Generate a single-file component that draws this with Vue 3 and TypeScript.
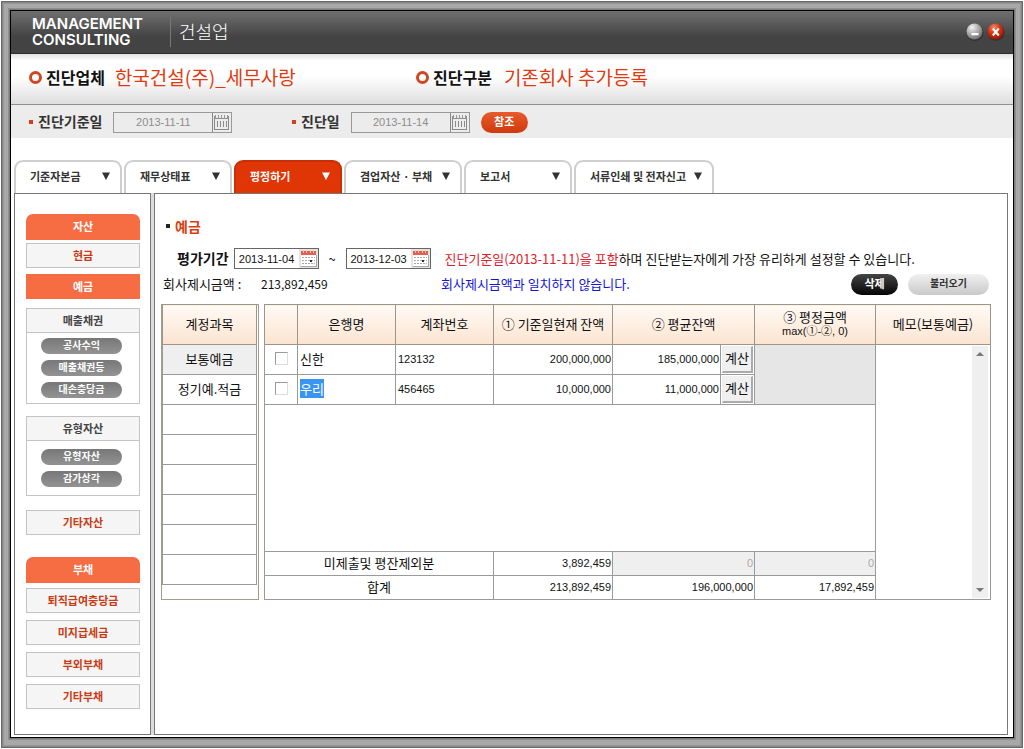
<script setup lang="ts">
import { ref } from 'vue'

interface Tab { label: string; width: string }
interface Deposit { id: number; bank: string; account: string; balance: string; average: string; checked: boolean; selected: boolean }

const tabs: Tab[] = [
  { label: '기준자본금', width: 'w-m' },
  { label: '재무상태표', width: 'w-m' },
  { label: '평정하기', width: 'w-m' },
  { label: '겸업자산 · 부채', width: 'w-l' },
  { label: '보고서', width: 'w-m' },
  { label: '서류인쇄 및 전자신고', width: 'w-xl' },
]
const activeTab = ref('평정하기')

const accounts = ['보통예금', '정기예.적금', '', '', '', '', '', '']
const debts = ['퇴직급여충당금', '미지급세금', '부외부채', '기타부채']

const deposits = ref<Deposit[]>([
  { id: 1, bank: '신한', account: '123132', balance: '200,000,000', average: '185,000,000', checked: false, selected: false },
  { id: 2, bank: '우리', account: '456465', balance: '10,000,000', average: '11,000,000', checked: false, selected: true },
])
const baseDate = ref('2013-11-11')
const reviewDate = ref('2013-11-14')
const fromDate = ref('2013-11-04')
const toDate = ref('2013-12-03')
const memo = ref('')
</script>

<template>
  <div class="frame">
    <div class="bezel">
      <div class="window">
        <header class="titlebar">
          <div class="brand"><div>MANAGEMENT</div><div>CONSULTING</div></div>
          <h1 class="product">건설업</h1>
          <div class="controls">
            <button class="ctl" type="button" aria-label="최소화">
              <svg width="18" height="18" viewBox="0 0 18 18">
                <defs><radialGradient id="gm" cx="35%" cy="25%" r="80%"><stop offset="0" stop-color="#f2f2f2" /><stop offset=".5" stop-color="#adadad" /><stop offset="1" stop-color="#6c6c6c" /></radialGradient></defs>
                <circle cx="9" cy="9.500" r="8.500" fill="#333" /><circle cx="8.500" cy="8.500" r="8" fill="url(#gm)" />
                <rect x="5.500" y="10" width="7" height="2.200" fill="#fff" />
              </svg>
            </button>
            <button class="ctl" type="button" aria-label="닫기">
              <svg width="18" height="18" viewBox="0 0 18 18">
                <defs><radialGradient id="gx" cx="40%" cy="25%" r="80%"><stop offset="0" stop-color="#f48a6c" /><stop offset=".5" stop-color="#d92f10" /><stop offset="1" stop-color="#8e1402" /></radialGradient></defs>
                <circle cx="9" cy="9.500" r="8.500" fill="#333" /><circle cx="8.500" cy="8.500" r="8" fill="url(#gx)" />
                <path d="M5.800 5.500l6 7M11.800 5.500l-6 7" stroke="#fff" stroke-width="2" fill="none" />
              </svg>
            </button>
          </div>
        </header>

        <section class="company">
          <div class="pair first"><i class="ring"></i><b>진단업체</b><span>한국건설(주)_세무사랑</span></div>
          <div class="pair"><i class="ring"></i><b>진단구분</b><span class="kind">기존회사 추가등록</span></div>
        </section>

        <section class="dates">
          <div class="date-group first">
            <i class="dot"></i><label for="base">진단기준일</label>
            <div class="datebox wide">
              <input id="base" v-model="baseDate" type="text" readonly>
              <button type="button" aria-label="진단기준일 달력">
                <svg width="19" height="19" viewBox="0 0 19 19" shape-rendering="crispEdges">
                  <path d="M.5 0v19" stroke="#888" /><path d="M2.500 3v13.500h14V3M2 5.500h15" fill="none" stroke="#8a8a8a" /><path d="M3.500 2v4M6.500 2v4M9.500 2v4M12.500 2v4M15.500 2v4" stroke="#999" /><path d="M5.500 8v6M8.500 8v6M11.500 8v6M14.500 8v6" stroke="#8a8a8a" />
                </svg>
              </button>
            </div>
          </div>
          <div class="date-group">
            <i class="dot"></i><label for="review">진단일</label>
            <div class="datebox wide">
              <input id="review" v-model="reviewDate" type="text" readonly>
              <button type="button" aria-label="진단일 달력">
                <svg width="19" height="19" viewBox="0 0 19 19" shape-rendering="crispEdges">
                  <path d="M.5 0v19" stroke="#888" /><path d="M2.500 3v13.500h14V3M2 5.500h15" fill="none" stroke="#8a8a8a" /><path d="M3.500 2v4M6.500 2v4M9.500 2v4M12.500 2v4M15.500 2v4" stroke="#999" /><path d="M5.500 8v6M8.500 8v6M11.500 8v6M14.500 8v6" stroke="#8a8a8a" />
                </svg>
              </button>
            </div>
          </div>
          <button class="pill red" type="button">참조</button>
        </section>

        <nav class="tabs">
          <button v-for="t in tabs" :key="t.label" type="button" class="tab" :class="[t.width, { active: t.label === activeTab }]" @click="activeTab = t.label">
            <span>{{ t.label }}</span>
            <svg width="8" height="8" viewBox="0 0 8 8"><path d="M0 .5h8L4 8z" fill="currentColor" /></svg>
          </button>
        </nav>

        <div class="body">
          <aside class="side">
            <button class="head" type="button">자산</button>
            <button class="item s3" type="button">현금</button>
            <button class="item on s6" type="button">예금</button>
            <div class="group s9">
              <div class="group-title">매출채권</div>
              <div class="subs">
                <button type="button">공사수익</button>
                <button type="button">매출채권등</button>
                <button type="button">대손충당금</button>
              </div>
            </div>
            <div class="group s12">
              <div class="group-title">유형자산</div>
              <div class="subs">
                <button type="button">유형자산</button>
                <button type="button">감가상각</button>
              </div>
            </div>
            <button class="item s14" type="button">기타자산</button>
            <button class="head s22" type="button">부채</button>
            <div class="debts">
              <button v-for="d in debts" :key="d" class="item" type="button">{{ d }}</button>
            </div>
          </aside>

          <main class="content">
            <h2>예금</h2>
            <div class="period">
              <label for="from">평가기간</label>
              <div class="datebox">
                <input id="from" v-model="fromDate" type="text">
                <button type="button" aria-label="시작일 달력">
                  <svg width="19" height="19" viewBox="0 0 19 19" shape-rendering="crispEdges">
                    <path d="M0 0h19v19H0z" fill="#e4e4e4" /><path d="M2 6h15v11H2z" fill="#fff" /><path d="M2 2h15v4H2z" fill="#e4604e" /><path d="M4 1h1v3H4zM7 1h1v3H7zM11 1h1v3h-1zM14 1h1v3h-1z" fill="#f7c1b8" /><path d="M3 8.500h13M3 11.500h13M3 14.500h13" stroke="#aaa" stroke-dasharray="2 1" /><path d="M11 11h2v2h-2z" fill="#333" /><path d="M2 17.500h15.500V6" fill="none" stroke="#aaa" />
                  </svg>
                </button>
              </div>
              <span class="tilde">~</span>
              <div class="datebox">
                <input v-model="toDate" type="text" aria-label="종료일">
                <button type="button" aria-label="종료일 달력">
                  <svg width="19" height="19" viewBox="0 0 19 19" shape-rendering="crispEdges">
                    <path d="M0 0h19v19H0z" fill="#e4e4e4" /><path d="M2 6h15v11H2z" fill="#fff" /><path d="M2 2h15v4H2z" fill="#e4604e" /><path d="M4 1h1v3H4zM7 1h1v3H7zM11 1h1v3h-1zM14 1h1v3h-1z" fill="#f7c1b8" /><path d="M3 8.500h13M3 11.500h13M3 14.500h13" stroke="#aaa" stroke-dasharray="2 1" /><path d="M11 11h2v2h-2z" fill="#333" /><path d="M2 17.500h15.500V6" fill="none" stroke="#aaa" />
                  </svg>
                </button>
              </div>
              <p><em>진단기준일(2013-11-11)을 포함</em>하며 진단받는자에게 가장 유리하게 설정할 수 있습니다.</p>
            </div>
            <div class="amount">
              <span class="amount-label">회사제시금액 :</span>
              <span class="amount-value">213,892,459</span>
              <span class="warn">회사제시금액과 일치하지 않습니다.</span>
              <div class="actions">
                <button class="pill black" type="button">삭제</button>
                <button class="pill silver" type="button">불러오기</button>
              </div>
            </div>

            <div class="grids">
              <div class="accounts">
                <table>
                  <thead><tr><th>계정과목</th></tr></thead>
                  <tbody><tr v-for="(a, i) in accounts" :key="i"><td :class="{ current: i === 0 }">{{ a }}</td></tr></tbody>
                </table>
              </div>
              <table class="ledger">
                <colgroup>
                  <col class="c-check"><col class="c-name"><col class="c-name"><col class="c-bal"><col class="c-avg"><col class="c-calc"><col class="c-net"><col>
                </colgroup>
                <thead>
                  <tr>
                    <th></th><th>은행명</th><th>계좌번호</th><th>① 기준일현재 잔액</th><th colspan="2">② 평균잔액</th>
                    <th class="two"><div>③ 평정금액</div><small>max(①-②, 0)</small></th><th>메모(보통예금)</th>
                  </tr>
                </thead>
                <tbody>
                  <tr v-for="(d, i) in deposits" :key="d.id" class="row">
                    <td class="mid"><input v-model="d.checked" type="checkbox" :aria-label="d.bank"></td>
                    <td><mark v-if="d.selected">{{ d.bank }}</mark><template v-else>{{ d.bank }}</template></td>
                    <td class="digits">{{ d.account }}</td>
                    <td class="num">{{ d.balance }}</td>
                    <td class="num">{{ d.average }}</td>
                    <td class="calc"><button type="button">계산</button></td>
                    <td v-if="i === 0" rowspan="2" class="shade"></td>
                    <td v-if="i === 0" rowspan="5" class="memo">
                      <div class="memo-box">
                        <textarea v-model="memo" aria-label="메모(보통예금)"></textarea>
                        <div class="scroll">
                          <button type="button" aria-label="위로"><svg width="8" height="5" viewBox="0 0 8 5"><path d="M4 0l4 4H0z" fill="#777" /></svg></button>
                          <button type="button" aria-label="아래로"><svg width="8" height="5" viewBox="0 0 8 5"><path d="M4 5l4-4H0z" fill="#777" /></svg></button>
                        </div>
                      </div>
                    </td>
                  </tr>
                  <tr class="blank"><td colspan="7"></td></tr>
                  <tr class="sum"><td colspan="3" class="mid">미제출및 평잔제외분</td><td class="num">3,892,459</td><td colspan="2" class="num off">0</td><td class="num off">0</td></tr>
                  <tr class="sum"><td colspan="3" class="mid">합계</td><td class="num">213,892,459</td><td colspan="2" class="num">196,000,000</td><td class="num">17,892,459</td></tr>
                </tbody>
              </table>
            </div>
          </main>
        </div>
      </div>
    </div>
  </div>
</template>

<style>
body { margin: 0; background: #fff; }
</style>

<style scoped>
* { box-sizing: border-box; }
.frame {
  display: flex;
  min-height: 100vh;
  padding: 1px;
  color: #111;
  font: 13px/16px "Noto Sans CJK KR", "Liberation Sans", sans-serif;
}
.bezel {
  flex: 1;
  display: flex;
  padding: 9px 9px 10px;
  background: #a8a8a8;
  box-shadow: inset 0 0 0 1px #6a6a6a, inset 0 0 0 2px #868686, inset 0 0 0 3px #989898;
}
.window {
  flex: 1;
  min-width: 0;
  display: flex;
  flex-direction: column;
  border: 1px solid #000;
  background: #fff;
  box-shadow: 0 0 0 1px #7c7c7c, 0 0 0 2px #8e8e8e;
}
button { margin: 0; padding: 0 0 2px; border: 0; background: none; color: inherit; font: inherit; cursor: pointer; }
input, textarea { margin: 0; padding: 0; border: 0; background: none; color: inherit; font: inherit; }
svg { display: block; }
h1, h2, p { margin: 0; }

.titlebar {
  display: flex;
  align-items: center;
  height: 43px;
  padding: 0 8px 0 21px;
  background: linear-gradient(#707070, #444 60%, #434343);
  border-bottom: 1px solid #2e2e2e;
  color: #fff;
}
.brand { width: 138px; font: 600 15px/16px Inter, "Liberation Sans", sans-serif; }
.product { padding: 0 0 2px 8px; border-left: 1px solid #777; font-size: 18px; line-height: 28px; font-weight: 300; }
.controls { display: flex; gap: 3px; margin-left: auto; }
.controls button { padding: 0; }

.company {
  display: flex;
  align-items: center;
  height: 51px;
  padding: 0 18px 4px;
  border-bottom: 1px solid #8f8f8f;
  background: linear-gradient(#e2e2e2, #fff 14%, #fff 45%, #dedede);
}
.pair { display: flex; align-items: center; }
.pair.first { width: 387px; }
.pair b { margin: 0 10px 0 4px; padding-bottom: 1px; font-size: 16px; line-height: 20px; }
.pair span { padding-bottom: 1px; color: #e23a10; font-size: 19px; line-height: 24px; font-weight: 400; }
.pair .kind { margin-left: 2px; }
.ring { width: 13px; height: 13px; border: 3px solid #cf4620; border-radius: 50%; background: #fff; }

.dates { display: flex; align-items: center; height: 33px; padding: 1px 18px 0; background: #ececec; }
.date-group { display: flex; align-items: center; }
.date-group.first { width: 263px; }
.dot { width: 4px; height: 4px; background: #d2401c; }
.date-group label { margin: 0 11px 0 5px; padding-bottom: 2px; color: #333; font-size: 14px; line-height: 20px; font-weight: 700; }
.datebox { display: flex; width: 85px; height: 21px; border: 1px solid #666; background: #fff; }
.datebox input { flex: 1; min-width: 0; text-align: center; font-family: "Liberation Sans", sans-serif; font-size: 11px; line-height: 16px; }
.datebox button { padding: 0; }
.datebox.wide { width: 119px; border-color: #999; background: #ececec; color: #8c8c8c; }
.pill { height: 21px; border-radius: 11px; font-size: 11px; line-height: 18px; font-weight: 700; }
.pill.red { width: 47px; margin-left: 11px; background: linear-gradient(#e9592c, #cf3a0c); color: #fff; }
.pill.black { width: 47px; background: linear-gradient(#444, #050505); color: #fff; }
.pill.silver { width: 81px; background: linear-gradient(#f0f0f0, #c9c9c9); color: #333; font-size: 10px; }

.tabs { display: flex; gap: 2px; padding: 22px 5px 0 3px; }
.tab {
  display: flex;
  align-items: center;
  justify-content: space-between;
  height: 33px;
  padding: 0 10px 3px 14px;
  border: 2px solid #cfcfcf;
  border-width: 2px 2px 0;
  border-radius: 9px 9px 0 0;
  background: #fff;
  color: #333;
  font-size: 11px;
  line-height: 16px;
  font-weight: 700;
  white-space: nowrap;
}
.w-m { width: 108px; }
.w-l { width: 118px; }
.w-xl { width: 140px; }
.tab.active { border-color: #c92f08; background: #e03505; color: #fff; }

.body { flex: 1; display: flex; gap: 3px; margin: 0 5px 2px 3px; background: #dcdcdc; }
.side { flex: none; width: 137px; padding: 20px 10px 20px 11px; border: 1px solid #777; background: #fff; display: flex; flex-direction: column; }
.side { font-size: 11px; font-weight: 700; }
.head { flex: none; height: 26px; border-radius: 7px 7px 0 0; background: #f66c43; color: #fff; }
.item { flex: none; height: 25px; border: 1px solid #c4c4c4; background: #f5f5f5; color: #c93a14; }
.item.on { border-color: #f66c43; background: #f66c43; color: #fff; }
.s3 { margin-top: 3px; }
.s6 { margin-top: 6px; }
.s9 { margin-top: 9px; }
.s12 { margin-top: 12px; }
.s14 { margin-top: 14px; }
.s22 { margin-top: 22px; }
.debts { display: flex; flex-direction: column; gap: 7px; margin-top: 5px; }
.group { border: 1px solid #c4c4c4; }
.group-title { height: 24px; border-bottom: 1px solid #c4c4c4; background: #f5f5f5; color: #444; line-height: 22px; text-align: center; }
.subs { display: flex; flex-direction: column; align-items: center; gap: 6px; padding: 5px 3px 5px 0; }
.s12 .subs { padding: 8px 3px 8px 0; }
.subs button { width: 81px; height: 16px; border-radius: 8px; background: linear-gradient(#777, #939393); color: #fff; font-size: 10px; line-height: 14px; }

.content { flex: 1; min-width: 0; padding: 22px 16px 20px 6px; border: 1px solid #777; background: #fff; }
h2 { display: flex; align-items: center; gap: 5px; height: 22px; padding: 0 0 2px 5px; color: #d9400f; font-size: 14px; line-height: 20px; }
h2::before { content: ""; width: 4px; height: 4px; background: #222; }
.period { display: flex; align-items: center; height: 21px; margin-top: 10px; padding-left: 16px; white-space: nowrap; }
.period label { margin-right: 5px; padding-bottom: 2px; font-size: 14px; font-weight: 700; }
.tilde { width: 27px; text-align: center; }
.period p { margin-left: 14px; }
.period em { color: #e2202a; font-style: normal; }
.amount { display: flex; align-items: center; height: 22px; margin: 4px 2px 0; white-space: nowrap; }
.amount-label { width: 98px; }
.amount-value { width: 180px; font-size: 12px; }
.warn { color: #1414d8; }
.actions { display: flex; gap: 10px; margin-left: auto; }

.grids { display: flex; gap: 5px; margin-top: 9px; }
table { border-collapse: collapse; }
th {
  height: 40px;
  padding: 0 0 2px;
  border: 1px solid #9b968c;
  background: linear-gradient(#fffaf5, #fbe4d0);
  font-weight: 400;
}
td { padding: 0 2px 2px; border: 1px solid #9a9a9a; }
.accounts { flex: none; width: 98px; padding-right: 2px; border: 1px solid #a49c8c; }
.accounts table { width: 95px; margin: -1px 0 0; }
.accounts td { height: 30px; text-align: center; }
.accounts .current { background: #efefef; }
.ledger { flex: 1; width: 100%; table-layout: fixed; border: 1px solid #8c8674; }
.c-check { width: 33px; }
.c-name { width: 98px; }
.c-bal { width: 119px; }
.c-net { width: 121px; }
.c-avg { width: 108px; }
.c-calc { width: 34px; }
.two { line-height: 14px; }
.two small { display: block; font: 11px/14px "Liberation Sans", "Noto Sans CJK KR", sans-serif; }
.row td { height: 30px; }
.blank td { height: 147px; }
.sum td { height: 24px; }
.mid { text-align: center; }
.digits { font-family: "Liberation Sans", sans-serif; font-size: 11px; }
.num { padding: 0 1px 2px; text-align: right; font-family: "Liberation Sans", sans-serif; font-size: 11px; }
.off { background: #efefef; color: #aaa; }
.ledger .shade { background: #e6e6e6; }
mark { background: #3a95f2; color: #fff; }
input[type="checkbox"] { appearance: none; display: block; width: 13px; height: 13px; margin: 0 auto; border: 1px solid #999; border-right-color: #ddd; border-bottom-color: #ddd; background: #fff; }
.row .calc { padding: 1px; }
.calc button { display: block; width: 100%; height: 27px; border: 1px solid #eee; border-right: 2px solid #aaa; border-bottom: 2px solid #aaa; background: #f0f0f0; }
.row .memo { padding: 1px; }
.memo-box { display: flex; height: 252px; }
textarea { flex: 1; min-width: 0; resize: none; outline: 0; }
.scroll { display: flex; flex-direction: column; justify-content: space-between; width: 16px; margin-right: 1px; padding: 6px 0; background: #efefef; }
.scroll button { display: flex; justify-content: center; padding: 0; }
</style>
